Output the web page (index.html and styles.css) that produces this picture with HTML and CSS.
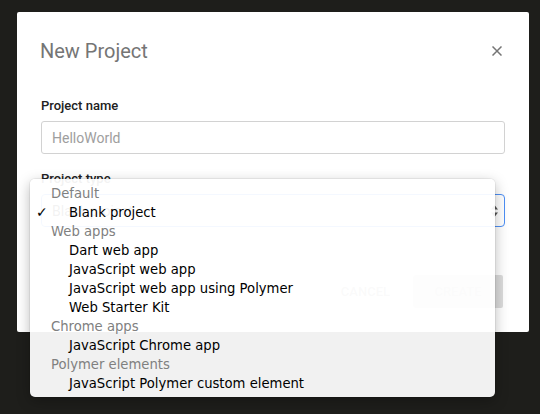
FILE: index.html
```html
<!DOCTYPE html>
<html>
<head>
<meta charset="utf-8">
<link rel="stylesheet" href="styles.css">
</head>
<body>
<div class="stage">
  <div class="dialog">
    <div class="header">
      <h2 class="title">New Project</h2>
      <button class="close" aria-label="Close">
        <svg width="10" height="10" viewBox="0 0 10 10"><path d="M0.5 0.5L9.5 9.5M9.5 0.5L0.5 9.5" stroke="#757575" stroke-width="1.5" fill="none"/></svg>
      </button>
    </div>
    <div class="form">
      <div class="field">
        <label class="label">Project name</label>
        <div class="input"><span class="placeholder">HelloWorld</span></div>
      </div>
      <div class="field field-type">
        <label class="label">Project type</label>
        <div class="select">
          <span class="select-value">Blank project</span>
          <svg class="select-arrows" width="7" height="12" viewBox="0 0 7 12"><path d="M3.5 0L7 4.5H0Z M3.5 12L7 7.5H0Z" fill="#555"/></svg>
        </div>
        <div class="menu">
          <div class="menu-header">Default</div>
          <div class="menu-item"><span class="check">✓</span>Blank project</div>
          <div class="menu-header">Web apps</div>
          <div class="menu-item">Dart web app</div>
          <div class="menu-item">JavaScript web app</div>
          <div class="menu-item">JavaScript web app using Polymer</div>
          <div class="menu-item">Web Starter Kit</div>
          <div class="menu-header">Chrome apps</div>
          <div class="menu-item">JavaScript Chrome app</div>
          <div class="menu-header">Polymer elements</div>
          <div class="menu-item">JavaScript Polymer custom element</div>
        </div>
      </div>
    </div>
    <div class="actions">
      <button class="btn btn-cancel">Cancel</button>
      <button class="btn btn-create">Create</button>
    </div>
  </div>
</div>
</body>
</html>
```
FILE: styles.css
```css
html, body {
  margin: 0;
  padding: 0;
}
body {
  width: 540px;
  height: 414px;
  overflow: hidden;
  background: #1e1e1b;
  font-family: Roboto, "Liberation Sans", sans-serif;
}
.stage {
  padding: 12px 0 0 17px;
}
.dialog {
  width: 512px;
  box-sizing: border-box;
  background: #fff;
  border-radius: 2px;
  padding: 0 24px 24px;
}
.header {
  display: flex;
  justify-content: space-between;
  align-items: center;
  padding-top: 27px;
}
.title {
  margin: 0 0 0 -1px;
  font-size: 20px;
  line-height: 24px;
  font-weight: 400;
  color: #757575;
}
.close {
  width: 18px;
  height: 18px;
  padding: 0;
  margin: 0 -1px 0 0;
  border: 0;
  background: transparent;
  display: flex;
  align-items: center;
  justify-content: center;
}
.form {
  margin-top: 35px;
}
.field + .field {
  margin-top: 17px;
}
.field-type {
  position: relative;
}
.label {
  display: block;
  font-size: 13px;
  line-height: 16px;
  font-weight: 500;
  color: #212121;
  margin-bottom: 7px;
}
.input, .select {
  height: 33px;
  box-sizing: border-box;
  border: 1px solid #d2d2d2;
  border-radius: 3px;
  padding: 0 10px;
  display: flex;
  align-items: center;
  font-size: 14px;
}
.placeholder {
  color: #9e9e9e;
}
.select {
  border-color: #4d8ff5;
  border-radius: 4px;
  justify-content: space-between;
  padding-right: 6px;
}
.select-value {
  color: #212121;
}
.menu {
  position: absolute;
  top: 8px;
  left: -11px;
  width: 465px;
  padding: 5px 0 4px;
  background: rgba(255, 255, 255, 0.94);
  border-radius: 5px;
  box-shadow: 0 0 0 1px rgba(0, 0, 0, 0.05), 0 4px 14px rgba(0, 0, 0, 0.28);
  font-family: "DejaVu Sans", sans-serif;
  font-size: 13.2px;
  line-height: 19px;
}
.menu-header {
  padding-left: 21px;
  color: #808080;
}
.menu-item {
  position: relative;
  padding-left: 39px;
  color: #000;
}
.check {
  position: absolute;
  left: 6px;
  font-size: 14px;
}
.actions {
  display: flex;
  justify-content: flex-end;
  align-items: center;
  margin-top: 48px;
  padding-right: 2px;
  gap: 7px;
}
.btn {
  height: 33px;
  border: 0;
  border-radius: 2px;
  font-family: Roboto, sans-serif;
  font-size: 13px;
  font-weight: 500;
  text-transform: uppercase;
  color: #a0a0a0;
  background: transparent;
}
.btn-cancel {
  padding: 0 16px;
}
.btn-create {
  width: 90px;
  background: #dcdcdc;
  color: #b5b5b5;
}
```
